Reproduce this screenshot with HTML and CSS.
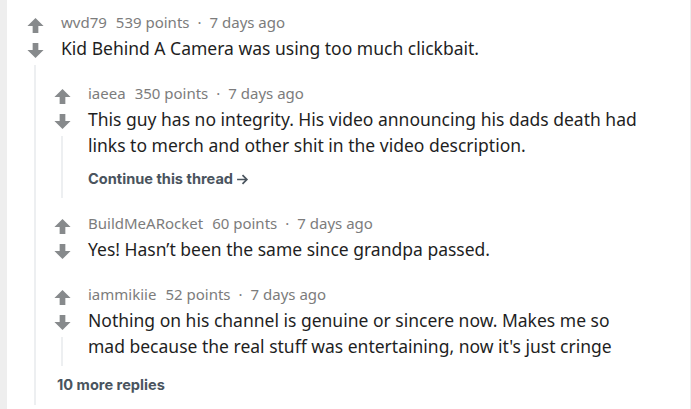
FILE: index.html
```html
<!DOCTYPE html>
<html>
<head>
<meta charset="utf-8">
<link rel="stylesheet" href="styles.css">
</head>
<body>
<div class="card">
  <div class="comment root">
    <div class="rail">
      <span class="vote"><svg viewBox="0 0 20 20"><path d="M10 2 L18.5 10.5 L13 10.5 L13 18 L7 18 L7 10.5 L1.5 10.5 Z"/></svg></span>
      <span class="vote down"><svg viewBox="0 0 20 20"><path d="M10 18 L18.5 9.5 L13 9.5 L13 2 L7 2 L7 9.5 L1.5 9.5 Z"/></svg></span>
      <span class="line"></span>
    </div>
    <div class="main">
      <div class="meta"><span class="user">wvd79</span><span class="pts">539 points</span><span class="dot">·</span><span>7 days ago</span></div>
      <p class="text">Kid Behind A Camera was using too much clickbait.</p>

      <div class="comment child">
        <div class="rail">
          <span class="vote"><svg viewBox="0 0 20 20"><path d="M10 2 L18.5 10.5 L13 10.5 L13 18 L7 18 L7 10.5 L1.5 10.5 Z"/></svg></span>
          <span class="vote down"><svg viewBox="0 0 20 20"><path d="M10 18 L18.5 9.5 L13 9.5 L13 2 L7 2 L7 9.5 L1.5 9.5 Z"/></svg></span>
          <span class="line"></span>
        </div>
        <div class="main">
          <div class="meta"><span class="user">iaeea</span><span class="pts">350 points</span><span class="dot">·</span><span>7 days ago</span></div>
          <p class="text">This guy has no integrity. His video announcing his dads death had links to merch and other shit in the video description.</p>
          <a class="more cont">Continue this thread <svg viewBox="0 0 12 12"><path d="M1 6 H10 M6 2 L10 6 L6 10" fill="none" stroke="currentColor" stroke-width="1.6"/></svg></a>
        </div>
      </div>

      <div class="comment child short">
        <div class="rail">
          <span class="vote"><svg viewBox="0 0 20 20"><path d="M10 2 L18.5 10.5 L13 10.5 L13 18 L7 18 L7 10.5 L1.5 10.5 Z"/></svg></span>
          <span class="vote down"><svg viewBox="0 0 20 20"><path d="M10 18 L18.5 9.5 L13 9.5 L13 2 L7 2 L7 9.5 L1.5 9.5 Z"/></svg></span>
          <span class="line"></span>
        </div>
        <div class="main">
          <div class="meta"><span class="user">BuildMeARocket</span><span class="pts">60 points</span><span class="dot">·</span><span>7 days ago</span></div>
          <p class="text">Yes! Hasn’t been the same since grandpa passed.</p>
        </div>
      </div>

      <div class="comment child">
        <div class="rail">
          <span class="vote"><svg viewBox="0 0 20 20"><path d="M10 2 L18.5 10.5 L13 10.5 L13 18 L7 18 L7 10.5 L1.5 10.5 Z"/></svg></span>
          <span class="vote down"><svg viewBox="0 0 20 20"><path d="M10 18 L18.5 9.5 L13 9.5 L13 2 L7 2 L7 9.5 L1.5 9.5 Z"/></svg></span>
          <span class="line"></span>
        </div>
        <div class="main">
          <div class="meta"><span class="user">iammikiie</span><span class="pts">52 points</span><span class="dot">·</span><span>7 days ago</span></div>
          <p class="text">Nothing on his channel is genuine or sincere now. Makes me so mad because the real stuff was entertaining, now it's just cringe</p>
        </div>
      </div>

      <a class="more replies">10 more replies</a>
    </div>
  </div>
</div>
</body>
</html>
```

FILE: styles.css
```css
html, body {
  margin: 0;
  padding: 0;
  height: 100%;
}
body {
  background: #eeeeee;
  font-family: "Noto Sans", "Open Sans", sans-serif;
}
.card {
  background: #ffffff;
  margin: 0 1px 0 7px;
  min-height: 100%;
  padding: 10px 0 0 17px;
  box-sizing: border-box;
}
.comment {
  display: flex;
  gap: 5px;
}
.rail {
  width: 22px;
  flex: none;
  display: flex;
  flex-direction: column;
  align-items: center;
  padding-top: 3px;
}
.vote {
  display: flex;
  align-items: center;
  justify-content: center;
  height: 24px;
  width: 22px;
}
.vote.down {
  height: 26px;
}
.vote svg {
  width: 19px;
  height: 19px;
  fill: #878a8c;
}
.line {
  flex: 1;
  width: 2px;
  background: #edeff1;
  margin-top: 2px;
}
.main {
  flex: 1;
  min-width: 0;
}
.meta {
  padding-left: 10px;
  font-size: 15px;
  line-height: 24px;
  color: #7c7c7c;
  display: flex;
}
.meta .pts { margin-left: 9px; }
.meta .dot { margin: 0 8px; }
.text {
  margin: 1px 0 0;
  padding-left: 10px;
  font-size: 17.5px;
  line-height: 26px;
  color: #1f1f1f;
  padding-right: 50px;
}
.child {
  margin-top: 20px;
}
.child + .child {
  margin-top: 13px;
}
.child .main {
  padding-bottom: 7px;
}
.short .line {
  display: none;
}
.more {
  display: flex;
  align-items: center;
  gap: 3px;
  font-family: "Inter", "Noto Sans", sans-serif;
  font-weight: 700;
  font-size: 14.6px;
  line-height: 20px;
  color: #4a545e;
}
.more svg {
  width: 13px;
  height: 13px;
}
.cont {
  padding-left: 10px;
  margin-top: 11px;
  margin-bottom: 2px;
}
.replies {
  padding-left: 6px;
  margin-top: 9px;
  padding-bottom: 10px;
}
```
